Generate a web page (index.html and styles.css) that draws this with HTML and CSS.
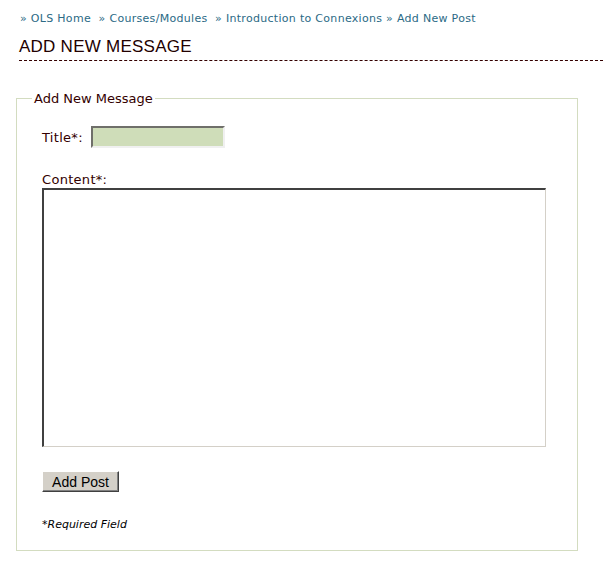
FILE: index.html
```html
<!DOCTYPE html>
<html>
<head>
<meta charset="utf-8">
<link rel="stylesheet" href="styles.css">
</head>
<body>
<div class="page">
  <div class="crumbs">
    <a href="#">» OLS Home</a>&nbsp; <a href="#">» Courses/Modules</a>&nbsp; <a href="#">» Introduction to Connexions</a> <a href="#">» Add New Post</a>
  </div>
  <h1 class="heading">ADD NEW MESSAGE</h1>
  <form class="form">
    <fieldset class="box">
      <legend class="legend">Add New Message</legend>
      <div class="row">
        <label class="label">Title*:</label>
        <input class="title-input" type="text">
      </div>
      <label class="label content-label">Content*:</label>
      <textarea class="content"></textarea>
      <div class="actions"><button class="btn" type="button">Add Post</button></div>
      <p class="req">*<i>Required Field</i></p>
    </fieldset>
  </form>
</div>
</body>
</html>
```
FILE: styles.css
```css
html, body { margin: 0; padding: 0; background: #fff; }
body { font-family: "DejaVu Sans", Verdana, sans-serif; color: #330000; }
.page { padding: 12px 0 0 19px; }
.crumbs { font-size: 11px; line-height: 14px; padding-left: 1px; letter-spacing: 0.3px; }
.crumbs a { color: #2b6a85; text-decoration: none; }
.heading {
  margin: 11px 0 0 0;
  font-family: "Liberation Sans", Arial, sans-serif;
  font-weight: normal;
  font-size: 17px;
  letter-spacing: 0.25px;
  line-height: 20px;
  color: #220000;
  padding-bottom: 3px;
  border-bottom: 1px dashed #330000;
}
.form { margin: 30px 25px 0 -3px; }
.box {
  margin: 0;
  border: 1px solid #d3dcc0;
  padding: 20px 25px 18px 25px;
}
.legend { font-size: 13px; color: #330000; padding: 0 2px; margin-left: -10px; }
.row { display: flex; align-items: center; gap: 8px; }
.label { font-size: 13px; letter-spacing: 0.3px; }
.title-input {
  width: 130px; height: 18px; box-sizing: content-box; padding: 0;
  background: #cfddb9;
  border: 2px solid; border-color: #6f6f6a #f0f0f0 #f0f0f0 #6f6f6a;
  margin: 0;
}
.content-label { display: block; margin-top: 24px; }
.content {
  display: block;
  width: 501px; height: 256px; box-sizing: content-box;
  margin: 1px 0 0 0; padding: 0; resize: none;
  border-style: solid; border-width: 2px 1px 1px 2px;
  border-color: #404040 #d4d0c8 #d4d0c8 #404040;
}
.actions { margin-top: 24px; }
.btn {
  width: 77px; height: 21px; padding: 0; margin: 0;
  font-family: "Liberation Sans", Arial, sans-serif; font-size: 14px; color: #000;
  background: #d4d0c8;
  border: 1px solid; border-color: #fff #404040 #404040 #fff;
  box-shadow: inset -1px -1px #808080;
}
.req { margin: 26px 0 0 0; font-size: 11px; line-height: 14px; color: #000; }
```
